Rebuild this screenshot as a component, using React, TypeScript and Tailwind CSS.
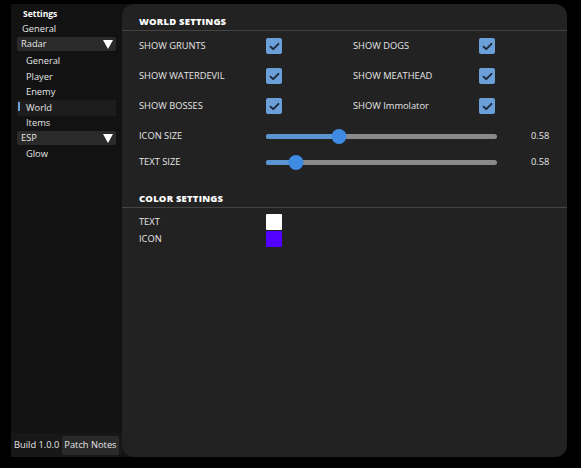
import React from "react";

const font = { fontFamily: '"Open Sans", "Noto Sans", sans-serif' };

function Check() {
  return (
    <div className="flex h-4 w-4 items-center justify-center rounded-[2px] bg-[#6a9fd7]">
      <svg width="11" height="9" viewBox="0 0 11 9" fill="none">
        <path d="M1.5 4.6L4.2 7.2L9.5 1.8" stroke="#1b2636" strokeWidth="1.8" strokeLinecap="round" strokeLinejoin="round" />
      </svg>
    </div>
  );
}

function Slider({ pct }: { pct: number }) {
  return (
    <div className="relative h-4 w-[231px]">
      <div className="absolute left-0 right-0 top-[6px] h-[5px] rounded-full bg-[#8a8a8a]" />
      <div className="absolute left-0 top-[6px] h-[5px] rounded-full bg-[#5b95d1]" style={{ width: `${pct}%` }} />
      <div
        className="absolute top-[1px] h-[15px] w-[15px] -translate-x-1/2 rounded-full bg-[#3f8ae2]"
        style={{ left: `${pct}%` }}
      />
    </div>
  );
}

function SideItem({ label, active }: { label: string; active?: boolean }) {
  return (
    <div className={`relative flex h-[15.5px] items-center pl-[9px] ${active ? "bg-[#1d1d1d]" : ""}`}>
      {active && <div className="absolute left-[1px] top-[2px] h-[9px] w-[2px] bg-[#6a9fd7]" />}
      <span>{label}</span>
    </div>
  );
}

function Dropdown({ label }: { label: string }) {
  return (
    <div className="flex h-[14px] items-center justify-between rounded-[2px] bg-[#2a2a2a] pl-1 pr-[3px]">
      <span>{label}</span>
      <svg width="10" height="9" viewBox="0 0 10 9">
        <path d="M0 0H10L5 9Z" fill="#ffffff" />
      </svg>
    </div>
  );
}

export default function App() {
  const checks: [string, string][] = [
    ["SHOW GRUNTS", "SHOW DOGS"],
    ["SHOW WATERDEVIL", "SHOW MEATHEAD"],
    ["SHOW BOSSES", "SHOW Immolator"],
  ];

  return (
    <div className="h-[468px] w-[581px] bg-black pl-[11px] pt-[4px] text-[9.3px] text-[#e6e6e6]" style={font}>
      <div className="flex h-[453px] w-[556px]">
        {/* Sidebar */}
        <div className="flex w-[111px] flex-col bg-[#121212]">
          <div className="flex-1 px-[6px] pt-[3px]">
            <div className="flex h-[14px] items-center pl-[6px] text-[8.5px] font-bold text-white">Settings</div>
            <div className="flex h-[16px] items-center pl-[5px]">General</div>
            <Dropdown label="Radar" />
            <div className="h-[2.5px]" />
            <SideItem label="General" />
            <SideItem label="Player" />
            <SideItem label="Enemy" />
            <SideItem label="World" active />
            <SideItem label="Items" />
            <Dropdown label="ESP" />
            <div className="h-[1.5px]" />
            <SideItem label="Glow" />
          </div>
          <div className="flex h-[24px] items-center gap-[3px] whitespace-nowrap bg-[#171717] pl-[3px]">
            <span>Build 1.0.0</span>
            <div className="flex h-[19px] items-center rounded-[2px] bg-[#2a2a2a] px-[2px]">Patch Notes</div>
          </div>
        </div>

        {/* Main panel */}
        <div className="flex-1 bg-[linear-gradient(to_right,#121212_20px,transparent_20px)]">
          <div className="h-[453px] rounded-[12px] bg-[#222222] pt-[12px]">
            <div className="border-b border-[#444444] pb-[2px] pl-[17px] text-[9.5px] font-extrabold leading-[12px] tracking-[0.2px] text-white">
              WORLD SETTINGS
            </div>
            <div className="flex flex-col gap-[14px] pl-[17px] pt-[7px]">
              {checks.map(([a, b]) => (
                <div key={a} className="grid grid-cols-[127px_87px_126px_16px] items-center">
                  <span>{a}</span>
                  <Check />
                  <span>{b}</span>
                  <Check />
                </div>
              ))}
              <div className="flex items-center">
                <span className="w-[127px]">ICON SIZE</span>
                <Slider pct={31.5} />
                <span className="pl-[34px]">0.58</span>
              </div>
            </div>
            <div className="flex items-center pl-[17px] pt-[10px]">
              <span className="w-[127px]">TEXT SIZE</span>
              <Slider pct={13} />
              <span className="pl-[34px]">0.58</span>
            </div>
            <div className="mt-[23px] border-b border-[#444444] pb-[2px] pl-[17px] text-[9.5px] font-extrabold leading-[12px] tracking-[0.2px] text-white">
              COLOR SETTINGS
            </div>
            <div className="flex flex-col gap-[1px] pl-[17px] pt-[6px]">
              <div className="flex items-center">
                <span className="w-[127px]">TEXT</span>
                <div className="h-4 w-4 rounded-[1px] bg-white" />
              </div>
              <div className="flex items-center">
                <span className="w-[127px]">ICON</span>
                <div className="h-4 w-4 rounded-[1px] bg-[#5200ff]" />
              </div>
            </div>
          </div>
        </div>
      </div>
    </div>
  );
}
